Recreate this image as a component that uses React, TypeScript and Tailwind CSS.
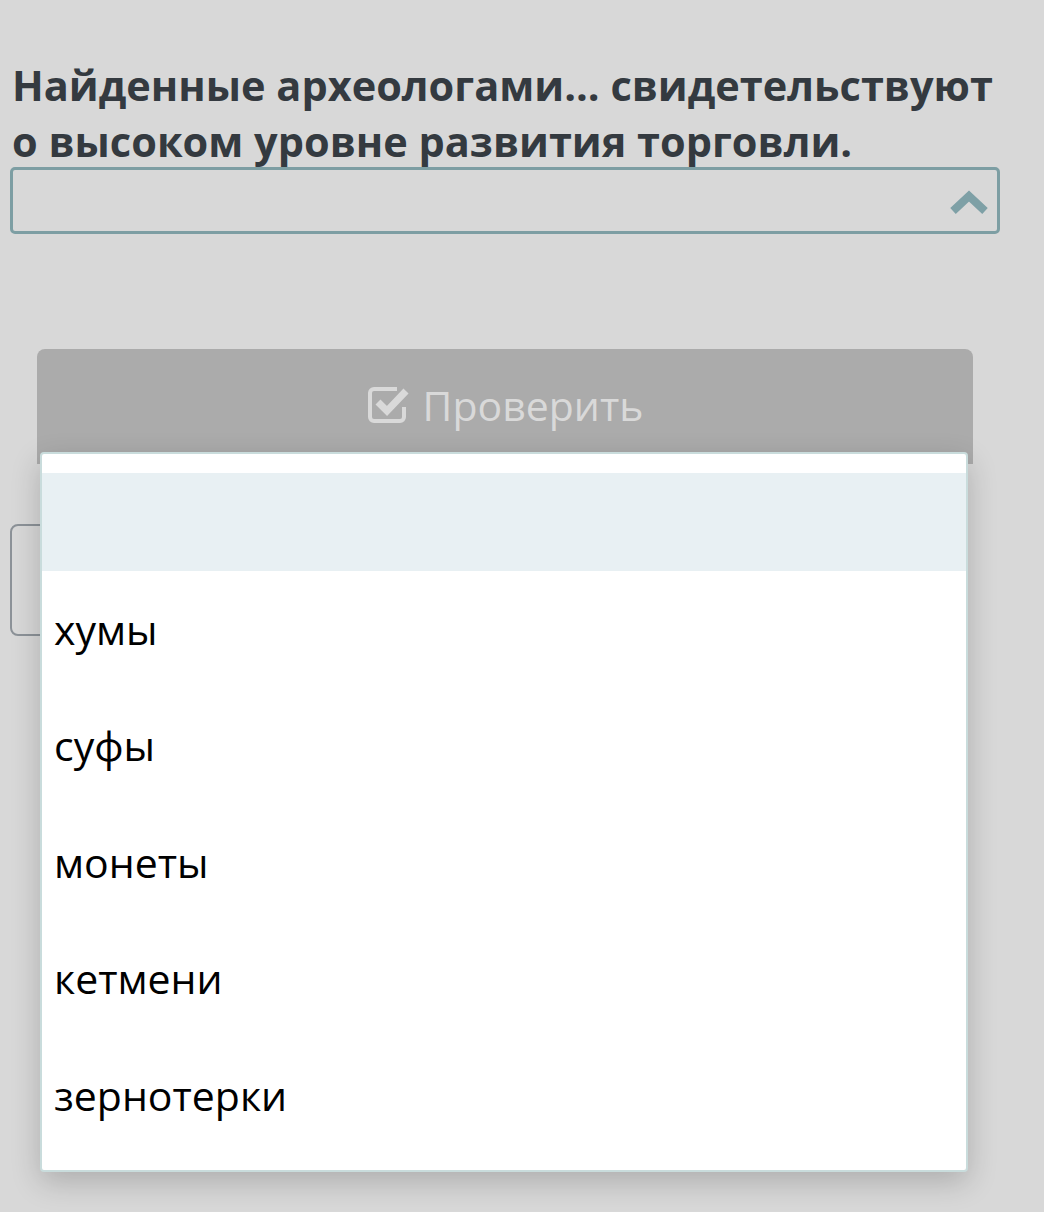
import React from 'react';

const options = ['', 'хумы', 'суфы', 'монеты', 'кетмени', 'зернотерки'];

const font = { fontFamily: '"Open Sans", "Noto Sans", sans-serif' };

const App: React.FC = () => {
  return (
    <div className="relative w-full h-[1212px] overflow-hidden bg-[#d8d8d8]" style={font}>
      <div className="pt-[57px] pl-[12px]">
        <h2 className="text-[41.5px] leading-[56px] font-bold text-[#343a40] whitespace-nowrap">
          Найденные археологами... свидетельствуют
          <br />
          о высоком уровне развития торговли.
        </h2>
      </div>

      {/* закрытый селект */}
      <div className="ml-[10px] mt-[-2px] w-[990px] h-[67px] border-[3px] border-[#7d9ea3] rounded-[5px] flex items-center justify-end pr-[7px]">
        <svg width="42" height="28" viewBox="0 0 42 28" className="mt-[4px]">
          <polyline points="5,22 21,7 37,22" fill="none" stroke="#7ea0a6" strokeWidth="8" strokeLinejoin="miter" />
        </svg>
      </div>

      {/* кнопка проверки */}
      <div className="ml-[37px] mt-[115px] w-[936px] h-[115px] bg-[#ababab] rounded-t-[8px] flex justify-center pt-[32px]">
        <div className="flex items-start gap-[12px] text-[#d9d9d9]">
          <svg width="44" height="40" viewBox="0 0 44 40" className="mt-[4px]">
            <path
              d="M30 4 H7 A4 4 0 0 0 3 8 V32 A4 4 0 0 0 7 36 H33 A4 4 0 0 0 37 32 V22"
              fill="none"
              stroke="#d9d9d9"
              strokeWidth="4"
            />
            <polyline points="11,17 20,26 39,6" fill="none" stroke="#d9d9d9" strokeWidth="7" strokeLinejoin="miter" />
          </svg>
          <span className="text-[41px] leading-[48px]">Проверить</span>
        </div>
      </div>

      {/* следующий блок под списком */}
      <div className="ml-[10px] mt-[60px] w-[900px] h-[112px] border-2 border-[#8c9298] rounded-[8px]" />

      {/* раскрытый список */}
      <div className="absolute left-[40px] top-[452px] w-[928px] h-[720px] bg-white border-2 border-[#c9dcdc] rounded-[4px] shadow-[0_10px_30px_rgba(0,0,0,0.2)] pt-[19px]">
        {options.map((opt, i) => (
          <div
            key={i}
            className={
              i === 0
                ? 'h-[98px] bg-[#e8f0f3]'
                : 'h-[116.5px] flex items-center pl-[12px] text-[41px] text-black'
            }
          >
            {opt}
          </div>
        ))}
      </div>
    </div>
  );
};

export default App;
